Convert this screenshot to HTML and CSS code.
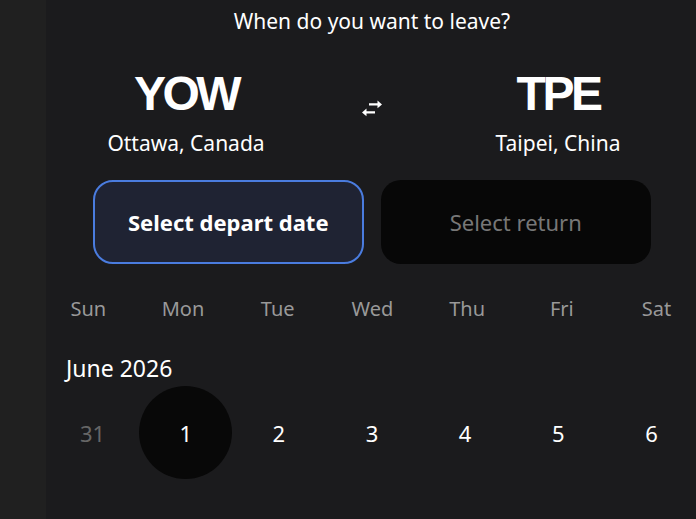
FILE: index.html
```html
<!DOCTYPE html>
<html lang="en">
<head>
  <meta charset="UTF-8" />
  <meta name="viewport" content="width=device-width, initial-scale=1" />
  <title>Select dates</title>
  <link rel="stylesheet" href="styles.css">
</head>
<body>

  <div class="side"></div>

  <div class="main">
    <p class="question">When do you want to leave?</p>

    <!-- Route -->
    <div class="route">
      <div class="place">
        <div class="code">YOW</div>
        <div class="city">Ottawa, Canada</div>
      </div>
      <div class="swap">
        <svg width="22" height="18" viewBox="0 0 22 18">
          <path d="M8 3.2h8.5V0.6L21 4.4l-4.5 3.8V5.6H8z" fill="#fff" />
          <path d="M14 11.2H5.5V8.6L1 12.4l4.5 3.8v-2.6H14z" fill="#fff" />
        </svg>
      </div>
      <div class="place">
        <div class="code">TPE</div>
        <div class="city">Taipei, China</div>
      </div>
    </div>

    <!-- Date buttons -->
    <div class="dates">
      <button class="date-btn active">Select depart date</button>
      <button class="date-btn">Select return</button>
    </div>

    <!-- Calendar -->
    <div class="week">
      <span>Sun</span><span>Mon</span><span>Tue</span><span>Wed</span><span>Thu</span><span>Fri</span><span>Sat</span>
    </div>

    <div class="month">June 2026</div>

    <div class="days">
      <span class="day muted">31</span>
      <span class="day today">1</span>
      <span class="day">2</span>
      <span class="day">3</span>
      <span class="day">4</span>
      <span class="day">5</span>
      <span class="day">6</span>
    </div>
  </div>

</body>
</html>
```

FILE: styles.css
```css
body {
  margin: 0;
  padding: 0;
  height: 519px;
  display: flex;
  overflow: hidden;
  background-color: #1b1b1d;
  font-family: 'Noto Sans', sans-serif;
  color: #fff;
}

.side {
  width: 46px;
  flex-shrink: 0;
  background: #202020;
}

.main {
  width: 652px;
  flex-shrink: 0;
  background: #1b1b1d;
}

.question {
  margin: 7px 0 0;
  font-size: 21px;
  line-height: 28px;
  text-align: center;
}

.route {
  display: grid;
  grid-template-columns: repeat(3, 1fr);
  padding: 0 47px;
  margin-top: 31px;
  text-align: center;
}

.code {
  font-family: 'Liberation Sans', sans-serif;
  font-weight: bold;
  font-size: 48px;
  line-height: 56px;
  letter-spacing: -3.5px;
}

.city {
  margin-top: 7px;
  font-size: 21px;
  line-height: 28px;
}

.swap {
  display: flex;
  justify-content: center;
  padding-top: 34px;
}

.dates {
  display: flex;
  gap: 17px;
  padding: 0 47px;
  margin-top: 23px;
}

.date-btn {
  flex: 1;
  height: 84px;
  border: 2px solid transparent;
  border-radius: 20px;
  background: #070707;
  color: #777;
  font-family: 'Noto Sans', sans-serif;
  font-size: 22px;
}

.date-btn.active {
  background: #1f2333;
  border-color: #4a7cdf;
  color: #fff;
  font-weight: bold;
}

.week {
  display: grid;
  grid-template-columns: repeat(7, 94.7px);
  margin: 31px 0 0 -5px;
  text-align: center;
  font-size: 20px;
  line-height: 28px;
  color: #999;
}

.month {
  margin-top: 30px;
  padding-left: 20px;
  font-size: 23px;
  line-height: 30px;
}

.days {
  display: grid;
  grid-template-columns: repeat(7, 1fr);
  margin-top: 3px;
  text-align: center;
  font-size: 22px;
}

.day {
  height: 93px;
  display: flex;
  align-items: center;
  justify-content: center;
}

.day.muted {
  color: #666;
}

.day.today {
  width: 93px;
  margin: 0 auto;
  border-radius: 50%;
  background: #080808;
}
```
